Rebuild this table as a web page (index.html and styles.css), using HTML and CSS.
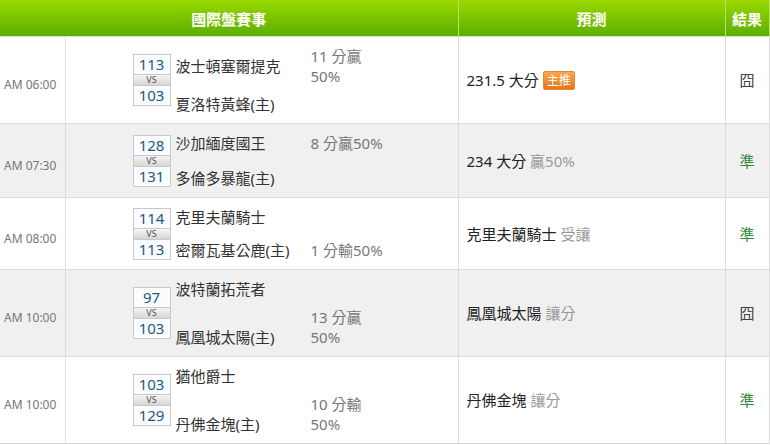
FILE: index.html
```html
<!DOCTYPE html>
<html lang="zh-Hant">
<head>
    <meta charset="UTF-8" />
    <meta name="viewport" content="width=device-width, initial-scale=1.0" />
    <title>國際盤賽事</title>
    <link rel="stylesheet" href="styles.css">
</head>
<body>
    <table class="games">
        <colgroup>
            <col class="c-time">
            <col class="c-match">
            <col class="c-pred">
            <col class="c-res">
        </colgroup>
        <thead>
            <tr>
                <th colspan="2">國際盤賽事</th>
                <th>預測</th>
                <th>結果</th>
            </tr>
        </thead>
        <tbody>
            <tr>
                <td class="time">AM 06:00</td>
                <td class="match">
                    <div class="matchup wrap">
                        <div class="score"><span>113</span><span class="vs">VS</span><span>103</span></div>
                        <div class="team team1">波士頓塞爾提克</div>
                        <div class="odds">11 分贏 50%</div>
                        <div class="team team2">夏洛特黃蜂(主)</div>
                    </div>
                </td>
                <td class="pred">231.5 大分 <span class="badge">主推</span></td>
                <td class="res">囧</td>
            </tr>
            <tr class="alt">
                <td class="time">AM 07:30</td>
                <td class="match">
                    <div class="matchup">
                        <div class="score"><span>128</span><span class="vs">VS</span><span>131</span></div>
                        <div class="team team1">沙加緬度國王</div>
                        <div class="odds">8 分贏50%</div>
                        <div class="team team2">多倫多暴龍(主)</div>
                    </div>
                </td>
                <td class="pred">234 大分 <span class="note">贏50%</span></td>
                <td class="res hit">準</td>
            </tr>
            <tr>
                <td class="time">AM 08:00</td>
                <td class="match">
                    <div class="matchup tight">
                        <div class="score"><span>114</span><span class="vs">VS</span><span>113</span></div>
                        <div class="team team1">克里夫蘭騎士</div>
                        <div class="team team2">密爾瓦基公鹿(主)</div>
                        <div class="odds low">1 分輸50%</div>
                    </div>
                </td>
                <td class="pred">克里夫蘭騎士 <span class="note">受讓</span></td>
                <td class="res hit">準</td>
            </tr>
            <tr class="alt">
                <td class="time">AM 10:00</td>
                <td class="match">
                    <div class="matchup wrap">
                        <div class="score"><span>97</span><span class="vs">VS</span><span>103</span></div>
                        <div class="team team1">波特蘭拓荒者</div>
                        <div class="team team2">鳳凰城太陽(主)</div>
                        <div class="odds low">13 分贏 50%</div>
                    </div>
                </td>
                <td class="pred">鳳凰城太陽 <span class="note">讓分</span></td>
                <td class="res">囧</td>
            </tr>
            <tr>
                <td class="time">AM 10:00</td>
                <td class="match">
                    <div class="matchup wrap">
                        <div class="score"><span>103</span><span class="vs">VS</span><span>129</span></div>
                        <div class="team team1">猶他爵士</div>
                        <div class="team team2">丹佛金塊(主)</div>
                        <div class="odds low">10 分輸 50%</div>
                    </div>
                </td>
                <td class="pred">丹佛金塊 <span class="note">讓分</span></td>
                <td class="res hit">準</td>
            </tr>
        </tbody>
    </table>
</body>
</html>
```

FILE: styles.css
```css
body {
    margin: 0;
    background: #fff;
    font-family: "Noto Sans", "Noto Sans CJK TC", sans-serif;
    color: #333;
}
.games {
    width: 769px;
    border-collapse: collapse;
    table-layout: fixed;
}
.c-time {
    width: 65px;
}
.c-match {
    width: 393px;
}
.c-pred {
    width: 267px;
}
.c-res {
    width: 44px;
}
.games th {
    height: 36px;
    padding: 0;
    background: linear-gradient(#9ad900, #5cae00);
    color: #fff;
    font-size: 15px;
    font-weight: bold;
    border-right: 1px solid #b9e266;
    border-bottom: 1px solid #d3ecb0;
}
.games td {
    padding: 9px 0;
    border-right: 1px solid #dcdcdc;
    border-bottom: 1px solid #dcdcdc;
    vertical-align: middle;
    font-size: 15px;
    line-height: 20px;
}
.games tr.alt td {
    background: #f0f0f0;
}
.games td.time {
    padding: 14px 0 4px 4px;
    font-size: 12px;
    color: #777;
}
.matchup {
    display: grid;
    grid-template-columns: 38px 130px 80px;
    grid-template-rows: auto auto;
    column-gap: 5px;
    row-gap: 15px;
    width: 258px;
    margin: 0 auto;
}
.matchup.tight {
    row-gap: 13px;
}
.matchup.wrap {
    row-gap: 8px;
}
.score {
    grid-column: 1;
    grid-row: 1 / span 2;
    align-self: center;
    display: flex;
    flex-direction: column;
    border: 1px solid #c9c9c9;
    text-align: center;
}
.score span {
    height: 19px;
    line-height: 19px;
    background: #fafcff;
    color: #235a80;
    font-size: 15px;
}
.score .vs {
    height: 10px;
    line-height: 10px;
    font-size: 9px;
    color: #555;
    background: linear-gradient(#f6f6f6, #d6d6d6);
    border-top: 1px solid #c9c9c9;
    border-bottom: 1px solid #c9c9c9;
    overflow: hidden;
}
.team {
    grid-column: 2;
    color: #333;
}
.team1 {
    grid-row: 1;
    align-self: center;
}
.team2 {
    grid-row: 2;
    align-self: end;
}
.odds {
    grid-column: 3;
    grid-row: 1;
    color: #777;
}
.odds.low {
    grid-row: 2;
}
.games td.pred {
    padding-left: 8px;
    color: #222;
}
.note {
    color: #999;
}
.badge {
    display: inline-block;
    padding: 0 3px;
    font-size: 12px;
    line-height: 17px;
    color: #fff;
    background: linear-gradient(#f7a851, #e5761c);
    border: 1px solid #e3893a;
    border-radius: 2px;
    vertical-align: 1px;
}
.games td.res {
    text-align: center;
    color: #444;
}
.games td.res.hit {
    color: #2e8b3e;
}
```
